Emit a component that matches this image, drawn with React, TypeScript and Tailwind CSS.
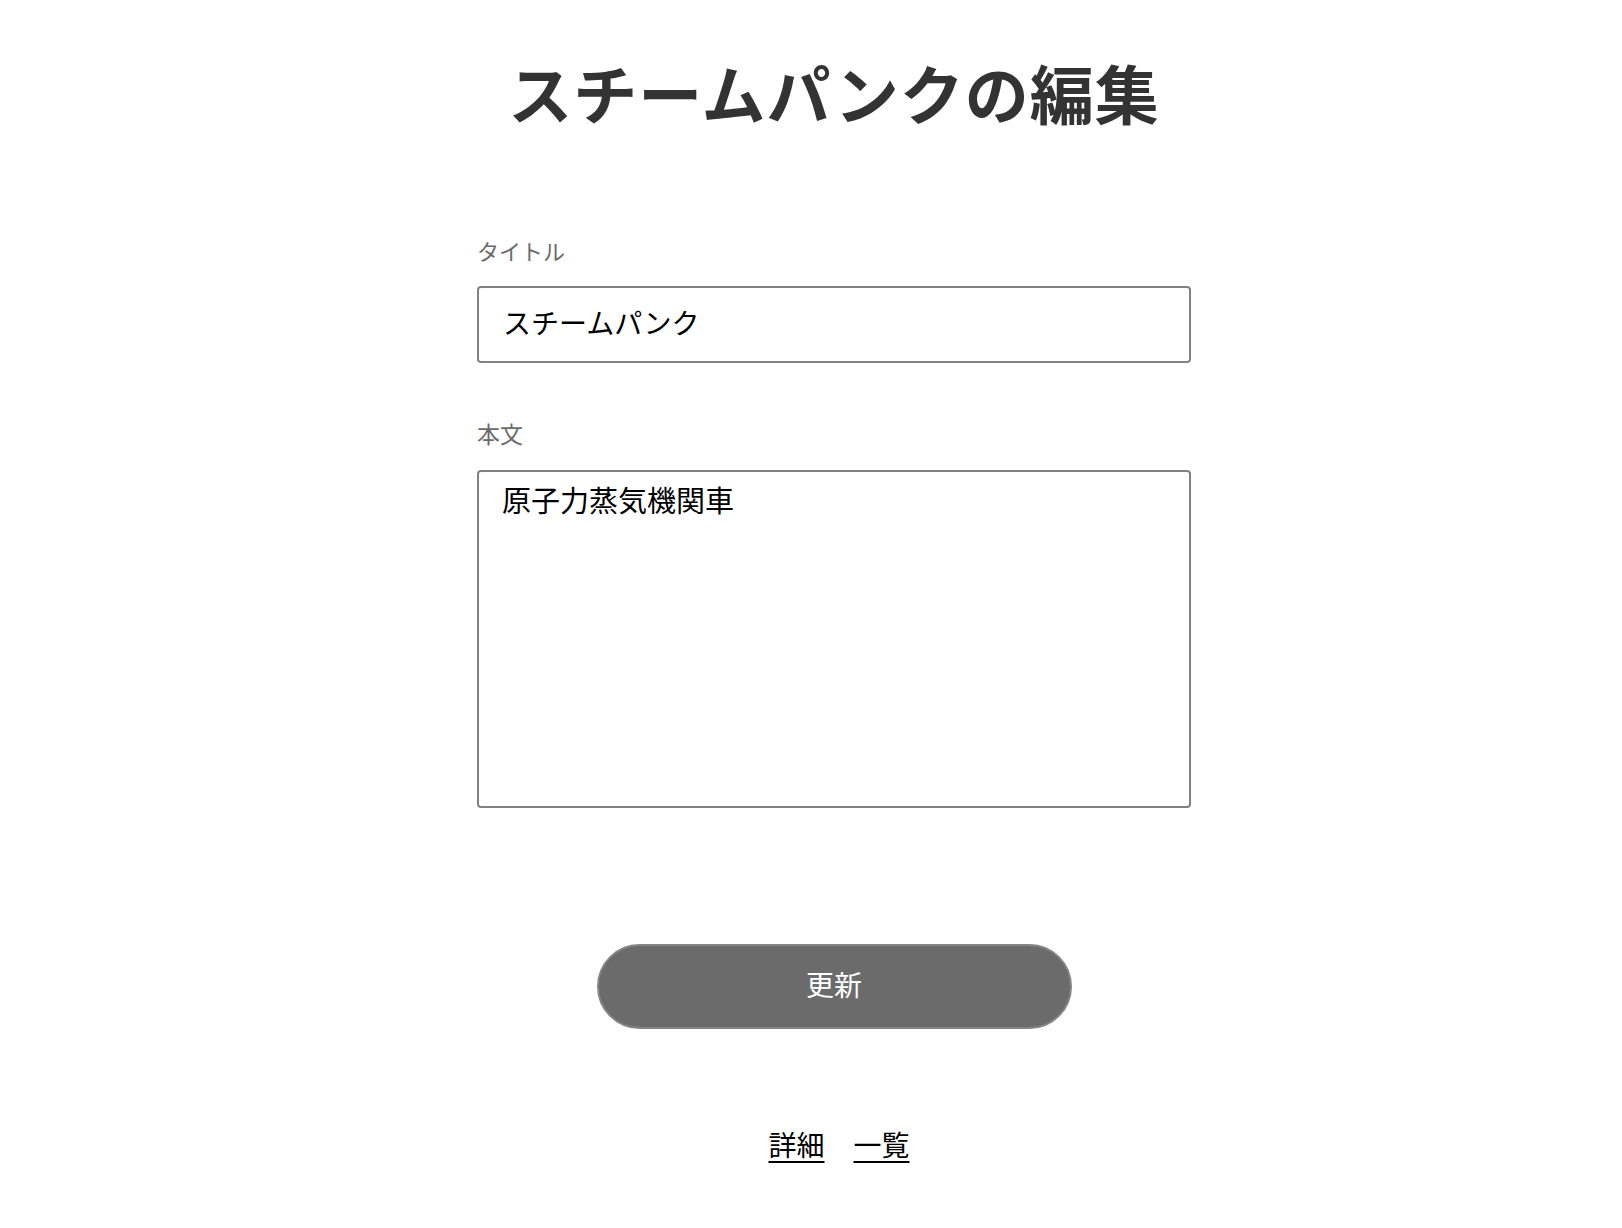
import { useState } from 'react'

const font = '"Noto Sans CJK JP", "Noto Sans", sans-serif'

export default function App() {
  const [title, setTitle] = useState('スチームパンク')
  const [body,  setBody]  = useState('原子力蒸気機関車')

  return (
    <div className="min-h-screen bg-white pl-[46px] text-black" style={{ fontFamily: font }}>
      <div className="mx-auto flex w-[714px] flex-col items-center pt-[41px]">
        <h1 className="h-[100px] text-[64px] font-bold leading-[100px] tracking-[1px] text-[#333]">
          スチームパンクの編集
        </h1>

        <form className="mt-[93px] flex w-full flex-col" onSubmit={e => e.preventDefault()}>
          <label className="text-[22px] leading-[33px] text-[#6b6b6b]">タイトル</label>
          <input
            value={title}
            onChange={e => setTitle(e.target.value)}
            className="mt-[19px] h-[77px] w-full rounded-[4px] border-2 border-[#828282] px-[24px] pb-[6px] text-[28px] outline-none"
          />

          <label className="mt-[54px] text-[23px] leading-[33px] text-[#6b6b6b]">本文</label>
          <textarea
            value={body}
            onChange={e => setBody(e.target.value)}
            className="mt-[20px] h-[338px] w-full resize-none rounded-[4px] border-2 border-[#828282] px-[23px] pt-[7px] pb-[9px] text-[29px] leading-[40px] outline-none"
          />

          <div className="mt-[136px] flex justify-center">
            <button
              type="submit"
              className="h-[85px] w-[475px] rounded-full border-2 border-[#858585] bg-[#6b6b6b] pb-[5px] text-[28px] text-white"
            >
              更新
            </button>
          </div>
        </form>

        <div className="ml-[10px] mt-[95px] flex gap-[29px] text-[28px] leading-[40px]">
          <a href="#" className="underline underline-offset-[5px]">詳細</a>
          <a href="#" className="underline underline-offset-[5px]">一覧</a>
        </div>
      </div>
    </div>
  )
}
